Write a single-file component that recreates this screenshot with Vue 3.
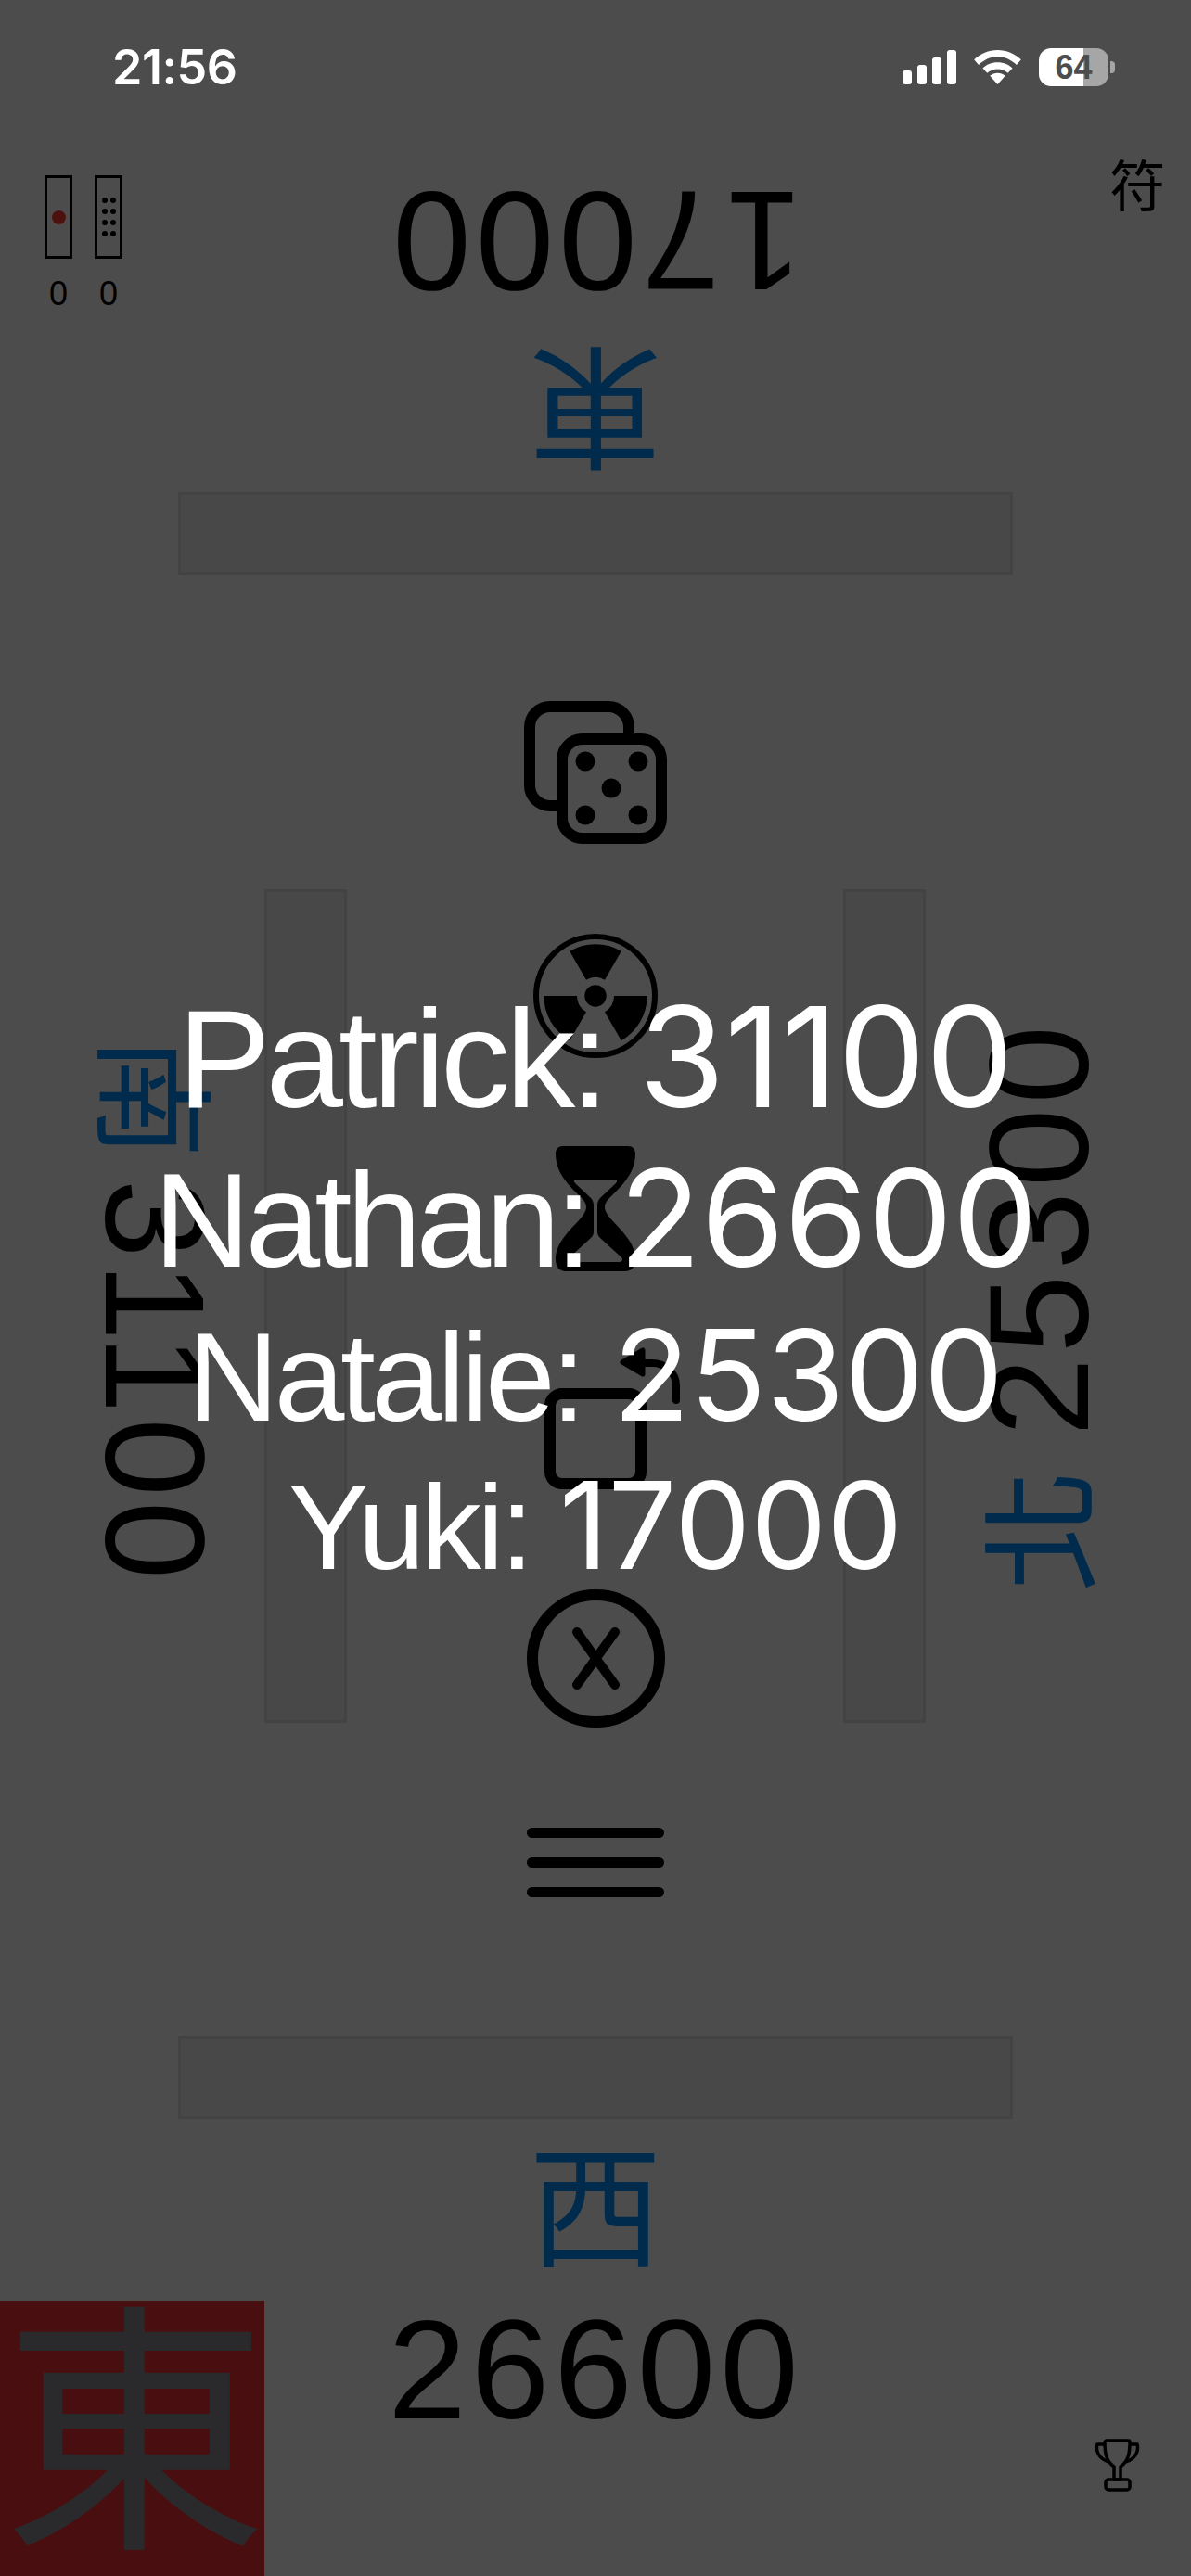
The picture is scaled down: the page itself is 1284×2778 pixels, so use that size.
<template>
  <div class="page">
    <div class="board">
      <section class="seat seat-top">
        <div class="tray tray-h"></div>
        <div class="wind">東</div>
        <div class="score">17000</div>
      </section>

      <div class="middle">
        <section class="side side-left">
          <div class="side-line">
            <span class="wind">南</span>
            <span class="score">31100</span>
          </div>
          <div class="tray tray-v"></div>
        </section>

        <nav class="tools">
          <svg class="icon dice" viewBox="0 0 154 154" fill="none" stroke="#000" stroke-width="12">
            <path d="M42 113H28A22 22 0 0 1 6 91V28A22 22 0 0 1 28 6H91A22 22 0 0 1 113 28V40" />
            <rect x="41" y="41" width="107" height="107" rx="22" />
            <g fill="#000" stroke="none">
              <circle cx="66" cy="65" r="10.5" />
              <circle cx="123" cy="65" r="10.5" />
              <circle cx="94" cy="94" r="10.5" />
              <circle cx="66" cy="123" r="10.5" />
              <circle cx="123" cy="123" r="10.5" />
            </g>
          </svg>

          <svg class="icon radiation" viewBox="-67 -67 134 134">
            <circle r="64" fill="none" stroke="#000" stroke-width="6" />
            <circle r="11.700" fill="#000" />
            <path v-for="deg in [0, 120, 240]" :key="deg" :transform="`rotate(${deg})`" fill="#000"
              d="M-27.850 -48.200A55.700 55.700 0 0 1 27.850 -48.200L10 -17.300A20 20 0 0 0 -10 -17.300Z" />
          </svg>

          <svg class="icon hourglass" viewBox="0 0 86 135">
            <path fill-rule="evenodd" fill="#000" d="M8 0H78C83 0 86 3 86 8C86 30 70 44 58 56C54 60 53 63 53 66C53 70 56 74 60 79C72 92 86 105 86 122C86 130 82 135 75 135H11C4 135 0 130 0 122C0 105 14 92 26 79C30 74 33 70 33 66C33 63 32 60 28 56C16 44 0 30 0 8C0 3 3 0 8 0Z
            M22 36H64C66 36 67 38 65 40L48 56C46 58 45 61 45 64V92C45 95 46 97 48 99L71 120C73 122 72 125 69 125H17C14 125 13 122 15 120L38 99C40 97 41 95 41 92V64C41 61 40 58 38 56L21 40C19 38 20 36 22 36Z" />
          </svg>

          <svg class="icon rotate" viewBox="0 0 146 156" fill="none" stroke="#000" stroke-width="12">
            <rect x="6" y="53" width="98" height="97" rx="13" />
            <path d="M142 60V44A26 24 0 0 0 116 20H104" stroke-width="8" stroke-linecap="round" />
            <path d="M84 19L106 6V32Z" fill="#000" stroke-width="5" stroke-linejoin="round" />
          </svg>

          <svg class="icon cancel" viewBox="0 0 149 149" fill="none" stroke="#000" stroke-width="12" stroke-linecap="round">
            <circle cx="74.500" cy="74.500" r="68.500" />
            <path d="M54 46L95 103M95 46L54 103" stroke-width="10" />
          </svg>

          <svg class="icon menu" viewBox="0 0 148 75" fill="none" stroke="#000" stroke-width="11" stroke-linecap="round">
            <path d="M5.500 5.500H142.500M5.500 37.500H142.500M5.500 69.500H142.500" />
          </svg>
        </nav>

        <section class="side side-right">
          <div class="side-line">
            <span class="wind">北</span>
            <span class="score">25300</span>
          </div>
          <div class="tray tray-v"></div>
        </section>
      </div>

      <section class="seat seat-bottom">
        <div class="tray tray-h"></div>
        <div class="wind">西</div>
        <div class="score">26600</div>
      </section>
    </div>

    <div class="sticks">
      <div class="stick-col">
        <div class="stick"><i class="dot-red"></i></div>
        <span class="stick-count">0</span>
      </div>
      <div class="stick-col">
        <div class="stick">
          <div class="dots"><i v-for="n in 8" :key="n"></i></div>
        </div>
        <span class="stick-count">0</span>
      </div>
    </div>

    <div class="fu">符</div>
    <div class="round-tile">東</div>

    <svg class="trophy" viewBox="0 0 50 57" fill="none" stroke="#000" stroke-width="3.500" stroke-linejoin="round">
      <path d="M13 2H37C38 2 38 3 38 4C38 14 37 24 28 30V44H21V30C12 24 11 14 11 4C11 3 12 2 13 2Z" />
      <path d="M11 6H3C1 14 5 21 15 25M38 6H46C48 14 44 21 34 25" />
      <rect x="12" y="44" width="26" height="11" rx="3" />
    </svg>

    <div class="scrim">
      <div class="results">
        <div v-for="row in results" :key="row.name" :class="['result', row.size]">
          <span class="result-name">{{ row.name }}: </span><span class="result-points">{{ row.points }}</span>
        </div>
      </div>
    </div>

    <header class="status">
      <span class="time">21:56</span>
      <div class="status-icons">
        <div class="bars"><i v-for="h in barHeights" :key="h" :style="{ height: h + 'px' }"></i></div>
        <svg class="wifi" viewBox="0 0 52 38" fill="#fff">
          <path d="M26 38L17.500 28.500C22.500 24.300 29.500 24.300 34.500 28.500Z" />
          <path d="M26 13.500C33 13.500 38.500 16 42.500 20L37.500 25.500C34.500 22.700 30.500 21 26 21C21.500 21 17.500 22.700 14.500 25.500L9.500 20C13.500 16 19 13.500 26 13.500Z" />
          <path d="M26 0C36 0 45 4 52 10.500L47 16.500C41.500 11 34 7.500 26 7.500C18 7.500 10.500 11 5 16.500L0 10.500C7 4 16 0 26 0Z" />
        </svg>
        <div class="battery">
          <div class="battery-body"><span>64</span></div>
          <i class="battery-nub"></i>
        </div>
      </div>
    </header>
  </div>
</template>

<script setup>
const barHeights = [15, 21, 29, 37]

const results = [
  { name: 'Patrick', points: 31100, size: 'r1' },
  { name: 'Nathan', points: 26600, size: 'r2' },
  { name: 'Natalie', points: 25300, size: 'r3' },
  { name: 'Yuki', points: 17000, size: 'r4' },
]
</script>

<style>
html,
body {
  margin: 0;
  background: #fff;
}
</style>

<style scoped>
.page {
  position: relative;
  width: 1284px;
  height: 2778px;
  overflow: hidden;
  background: #fff;
  font-family: Inter, "Liberation Sans", "Noto Sans CJK TC", sans-serif;
  color: #000;
}

.board {
  display: flex;
  flex-direction: column;
  height: 100%;
}

.seat {
  display: flex;
  flex-direction: column;
  align-items: center;
  flex: none;
}

.seat-top {
  height: 620px;
  box-sizing: border-box;
  transform: rotate(180deg);
}

.seat-top .wind {
  margin-top: 10px;
}

.seat-top .score {
  margin-top: 42px;
}

.seat-bottom {
  height: 582px;
  margin-top: auto;
}

.tray {
  flex: none;
  box-sizing: border-box;
  background: #f0f0f0;
  border: 3px solid #dfdfdf;
}

.tray-h {
  width: 900px;
  height: 89px;
}

.tray-v {
  width: 89px;
  height: 899px;
}

.wind {
  font-family: "Noto Sans CJK TC", sans-serif;
  font-size: 144px;
  line-height: 144px;
  color: #0090ff;
}

.seat-bottom .wind {
  margin-top: 14px;
}

.score {
  font-family: "Liberation Sans", sans-serif;
  font-size: 152px;
  line-height: 150px;
  letter-spacing: 5px;
}

.seat-bottom .score {
  margin-top: 37px;
}

.middle {
  flex: 1;
  display: grid;
  grid-template-columns: 1fr 170px 1fr;
}

.side {
  display: flex;
  align-items: center;
  height: 899px;
  align-self: start;
  margin-top: 339px;
}

.side-left {
  padding-left: 102px;
  gap: 53px;
}

.side-right {
  flex-direction: row-reverse;
  padding-right: 99px;
  gap: 57px;
}

.side-line {
  writing-mode: vertical-rl;
  display: flex;
  align-items: center;
  width: 130px;
}

.side-left .side-line {
  gap: 23px;
  margin-top: 8px;
}

.side-right .side-line {
  gap: 36px;
  transform: rotate(180deg);
}

.side-line .wind {
  text-orientation: sideways;
  font-size: 132px;
  line-height: 132px;
  margin-left: 12px;
}

.side-line .score {
  line-height: 130px;
}

.tools {
  display: flex;
  flex-direction: column;
  align-items: center;
  padding-top: 136px;
}

.icon {
  display: block;
  flex: none;
}

.dice {
  width: 154px;
  height: 154px;
}

.radiation {
  width: 134px;
  height: 134px;
  margin-top: 97px;
}

.hourglass {
  width: 86px;
  height: 135px;
  margin-top: 95px;
}

.rotate {
  width: 146px;
  height: 156px;
  margin-top: 79px;
  margin-left: 36px;
}

.cancel {
  width: 149px;
  height: 149px;
  margin-top: 108px;
}

.menu {
  width: 148px;
  height: 75px;
  margin-top: 108px;
}

.sticks {
  position: absolute;
  left: 48px;
  top: 189px;
  display: flex;
  gap: 24px;
}

.stick-col {
  display: flex;
  flex-direction: column;
  align-items: center;
}

.stick {
  box-sizing: border-box;
  width: 30px;
  height: 90px;
  border: 3px solid #000;
  display: flex;
  align-items: center;
  justify-content: center;
}

.dot-red {
  width: 15px;
  height: 15px;
  border-radius: 50%;
  background: #ff3b30;
}

.dots {
  display: grid;
  grid-template-columns: 6px 6px;
  gap: 6px 3px;
}

.dots i {
  width: 6px;
  height: 6px;
  border-radius: 50%;
  background: #000;
}

.stick-count {
  margin-top: 18px;
  font-size: 36px;
  line-height: 40px;
  font-family: "Liberation Sans", sans-serif;
}

.fu {
  position: absolute;
  right: 28px;
  top: 161px;
  font-family: "Noto Sans CJK TC", sans-serif;
  font-size: 60px;
  line-height: 72px;
}

.round-tile {
  position: absolute;
  left: 0;
  bottom: 0;
  width: 285px;
  height: 297px;
  background: #f62f35;
  color: #8e8e93;
  font-family: "Noto Sans CJK TC", sans-serif;
  font-size: 285px;
  line-height: 244px;
  text-indent: 3px;
  overflow: hidden;
}

.trophy {
  position: absolute;
  left: 1180px;
  top: 2630px;
  width: 50px;
  height: 57px;
}

.scrim {
  position: absolute;
  inset: 0;
  background: rgba(0, 0, 0, 0.7);
  display: flex;
  align-items: center;
  justify-content: center;
}

.results {
  text-align: center;
  color: #fff;
  white-space: nowrap;
}

.result-name {
  font-family: "Liberation Sans", sans-serif;
  letter-spacing: -0.033em;
}

.result.r1 {
  font-size: 150px;
  line-height: 173px;
}

.result.r2 {
  font-size: 145px;
  line-height: 170px;
}

.r2 .result-name {
  letter-spacing: -0.04em;
}

.result.r3 {
  font-size: 136px;
  line-height: 164px;
}

.result.r4 {
  font-size: 130px;
  line-height: 155px;
}

.status {
  position: absolute;
  top: 0;
  left: 0;
  right: 0;
  height: 145px;
  display: flex;
  justify-content: space-between;
  padding: 48px 82px 0 121px;
  box-sizing: border-box;
  color: #fff;
}

.time {
  font-size: 52px;
  line-height: 50px;
  font-weight: 600;
  letter-spacing: -0.5px;
}

.status-icons {
  display: flex;
  align-items: flex-start;
  margin-top: 4px;
}

.bars {
  display: flex;
  align-items: flex-end;
  gap: 6px;
  height: 37px;
  margin-top: 2px;
}

.bars i {
  width: 10px;
  border-radius: 3px;
  background: #fff;
}

.wifi {
  width: 51px;
  height: 37px;
  margin: 2px 19px 0 19px;
}

.battery {
  display: flex;
  align-items: center;
  height: 41px;
}

.battery-body {
  width: 75px;
  height: 41px;
  border-radius: 13px;
  background: linear-gradient(90deg, #fff 48px, #a6a6a6 48px);
  color: #4d4d4d;
  font-family: "Liberation Sans", sans-serif;
  font-size: 36px;
  font-weight: 700;
  line-height: 41px;
  text-align: center;
}

.battery-nub {
  width: 5px;
  height: 13px;
  margin-left: 2px;
  border-radius: 0 4px 4px 0;
  background: #a6a6a6;
}
</style>
